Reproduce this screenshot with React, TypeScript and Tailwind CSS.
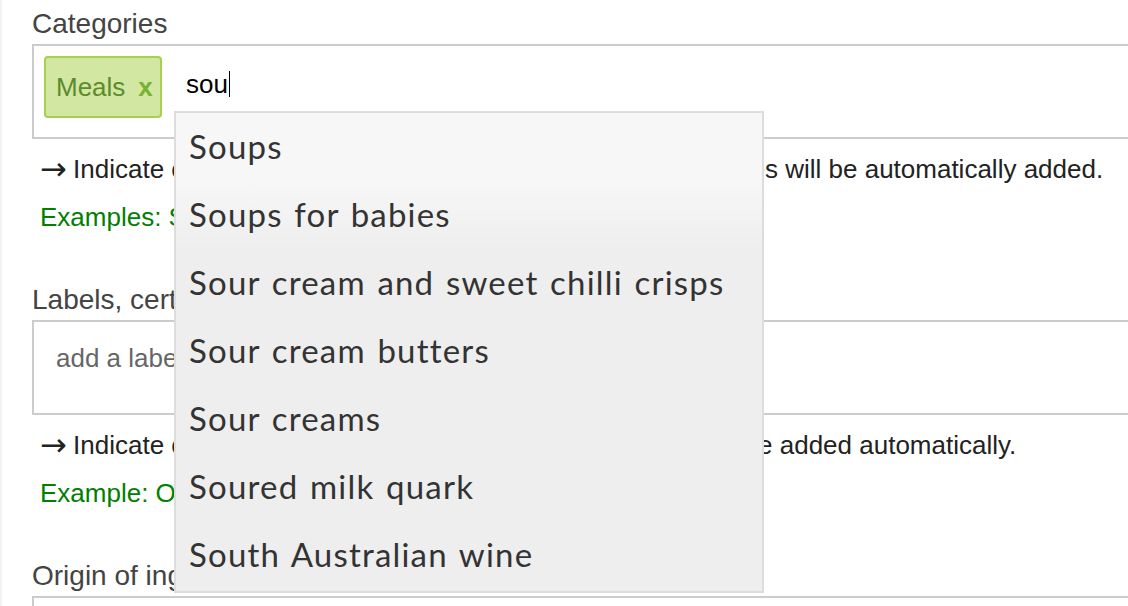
import React from 'react';

const suggestions = [
  'Soups',
  'Soups for babies',
  'Sour cream and sweet chilli crisps',
  'Sour cream butters',
  'Sour creams',
  'Soured milk quark',
  'South Australian wine',
];

function Help({ text, example }: { text: string; example: string }) {
  return (
    <div className="mt-[6px] pl-[8px] text-[26px] leading-[48px] whitespace-nowrap">
      <p className="text-[#222]">
        <span className="mr-[-1px] align-[-2px] font-['DejaVu_Sans',sans-serif] text-[32px] leading-none">→</span>{' '}
        {text}
      </p>
      <p className="text-[#008000]">{example}</p>
    </div>
  );
}

export default function App() {
  return (
    <div className="relative h-[606px] w-[1128px] overflow-hidden border-l-2 border-[#f3f3f3] bg-white font-['Liberation_Sans',Arial,sans-serif]">
      <div className="ml-[30px] w-[1200px] pt-[8px]">
        {/* Categories */}
        <section className="mb-[43px]">
          <label className="mb-[4px] block text-[28px] leading-[32px] text-[#444]">Categories</label>
          <div className="flex h-[95px] items-start border-2 border-[#cccccc] pt-[10px] pl-[10px]">
            <span className="flex h-[62px] w-[118px] items-center rounded-[4px] border-2 border-[#a8d04c] bg-[#d2e7a1] pl-[10px] text-[26px]">
              <span className="text-[#5c8b2c]">Meals</span>
              <span className="ml-[13px] font-bold text-[#79b131]">x</span>
            </span>
            <span className="ml-[24px] flex h-[56px] items-center text-[26px] text-black">
              sou
              <span className="ml-[1px] h-[26px] w-[1px] bg-black" />
            </span>
          </div>
          <Help
            text={'Indicate only the most specific category – "Parent" categories will be automatically added.'}
            example="Examples: Soups, Sweet spreads"
          />
        </section>

        {/* Labels */}
        <section className="mb-[43px]">
          <label className="mb-[4px] block text-[28px] leading-[32px] text-[#444]">
            Labels, certifications, awards
          </label>
          <div className="h-[95px] border-2 border-[#cccccc] pt-[8px] pl-[22px]">
            <span className="block text-[26px] leading-[56px] text-[#666]">add a label</span>
          </div>
          <Help
            text={'Indicate only the most specific labels – “Parent” labels will be added automatically.'}
            example="Example: Organic"
          />
        </section>

        {/* Origin */}
        <section>
          <label className="mb-[4px] block text-[28px] leading-[32px] text-[#444]">
            Origin of ingredients
          </label>
          <div className="h-[95px] border-2 border-[#cccccc]" />
        </section>
      </div>

      {/* autocomplete dropdown */}
      <ul className="absolute top-[111px] left-[172px] h-[482px] w-[590px] border-2 border-[#dddddd] bg-[#eeeeee] font-['Lato',sans-serif] text-[33px] tracking-[1.2px] text-[#333] [word-spacing:2px]">
        {suggestions.map((s, i) => (
          <li
            key={s}
            className={
              i === 0
                ? 'flex h-[68px] items-center bg-[#f7f7f7] pl-[13px]'
                : i === 1
                  ? 'flex h-[68px] items-center bg-gradient-to-b from-[#f7f7f7] to-[#eeeeee] pl-[13px]'
                  : 'flex h-[68px] items-center pl-[13px]'
            }
          >
            {s}
          </li>
        ))}
      </ul>
    </div>
  );
}
